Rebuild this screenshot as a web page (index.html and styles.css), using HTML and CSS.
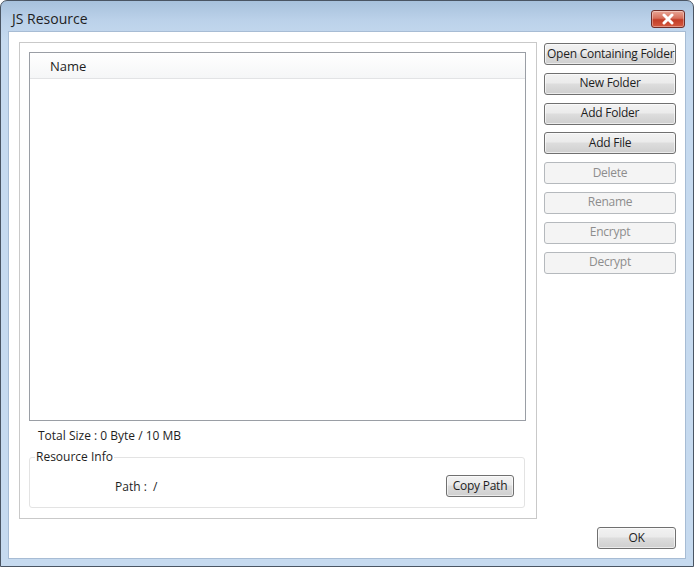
FILE: index.html
```html
<!DOCTYPE html>
<html>
<head>
<meta charset="utf-8">
<link rel="stylesheet" href="styles.css">
</head>
<body>
<div class="window">
  <div class="titlebar">
    <span class="title">JS Resource</span>
    <div class="close">
      <svg width="14" height="12" viewBox="0 0 14 12"><path d="M3 2 L11 10 M11 2 L3 10" stroke="#fff" stroke-width="3" stroke-linecap="round"/></svg>
    </div>
  </div>
  <div class="client">
    <div class="main">
      <div class="group">
        <div class="list">
          <div class="list-head">Name</div>
          <div class="list-body"></div>
        </div>
        <div class="total">Total Size : 0 Byte / 10 MB</div>
        <fieldset class="info">
          <legend>Resource Info</legend>
          <div class="info-row">
            <span class="path">Path :&nbsp; /</span>
            <button class="btn copy">Copy Path</button>
          </div>
        </fieldset>
      </div>
      <div class="side">
        <button class="btn">Open Containing Folder</button>
        <button class="btn">New Folder</button>
        <button class="btn">Add Folder</button>
        <button class="btn">Add File</button>
        <button class="btn" disabled>Delete</button>
        <button class="btn" disabled>Rename</button>
        <button class="btn" disabled>Encrypt</button>
        <button class="btn" disabled>Decrypt</button>
      </div>
    </div>
    <div class="footer">
      <button class="btn ok">OK</button>
    </div>
  </div>
</div>
</body>
</html>
```
FILE: styles.css
```css
* { box-sizing: border-box; }
html, body { margin: 0; padding: 0; }
body {
  width: 694px;
  height: 567px;
  overflow: hidden;
  font-family: "Open Sans", "Noto Sans", sans-serif;
  font-size: 12px;
  color: #1e1e1e;
  background: #fff;
}
.window {
  position: relative;
  width: 694px;
  height: 567px;
  border: 1px solid #4a5563;
  border-radius: 7px 7px 0 0;
  background: linear-gradient(180deg, #a7c1dc 0px, #bcd2ea 20px, #c6daef 40px, #c6daef 100%);
  display: flex;
  flex-direction: column;
}
.titlebar {
  height: 30px;
  display: flex;
  align-items: flex-start;
  justify-content: space-between;
  padding: 9px 8px 0 11px;
}
.title {
  font-size: 14px;
  line-height: 18px;
  color: #1e1e1e;
}
.close {
  width: 34px;
  height: 18px;
  margin-top: 0;
  border: 1px solid #6f2d28;
  border-radius: 3px;
  background: linear-gradient(180deg, #e8a595 0%, #d6705c 45%, #c23d27 55%, #d55a40 100%);
  display: flex;
  align-items: center;
  justify-content: center;
  box-shadow: inset 0 0 0 1px rgba(255,255,255,0.35);
}
.client {
  flex: 1;
  margin: 0 7px 7px 7px;
  background: #fff;
  border: 1px solid #a7bcd4;
  padding: 10px 9px 0 10px;
  display: flex;
  flex-direction: column;
}
.main {
  display: flex;
  gap: 7px;
}
.group {
  width: 518px;
  height: 477px;
  border: 1px solid #c9c9c9;
  box-shadow: inset 1px 1px 0 #fff;
  padding: 9px 10px 0 9px;
  display: flex;
  flex-direction: column;
}
.list {
  width: 497px;
  height: 369px;
  border: 1px solid #9a9ea5;
  display: flex;
  flex-direction: column;
}
.list-head {
  height: 26px;
  padding: 4px 0 0 20px;
  font-size: 13px;
  background: linear-gradient(180deg, #ffffff 0%, #f5f6f7 100%);
  border-bottom: 1px solid #e2e3e5;
}
.list-body { flex: 1; }
.total {
  margin: 6px 0 0 9px;
  height: 18px;
  line-height: 18px;
}
.info {
  margin: 5px 1px 0 0;
  padding: 0 10px 9px 0;
  border: 1px solid #e3e3e3;
  border-radius: 3px;
  height: 58px;
}
.info legend {
  padding: 0 1px;
  margin-left: 5px;
  line-height: 14px;
}
.info-row {
  display: flex;
  justify-content: space-between;
  align-items: center;
  padding-left: 85px;
  margin-top: 11px;
}
.path { margin-top: 0; }
.btn {
  font-family: inherit;
  font-size: 12px;
  color: #1e1e1e;
  height: 22px;
  padding: 0 2px 1px;
  border: 1px solid #707070;
  border-radius: 3px;
  background: linear-gradient(180deg, #f2f2f2 0%, #ebebeb 45%, #dddddd 50%, #cfcfcf 100%);
  box-shadow: inset 0 0 0 1px rgba(255,255,255,0.6);
  line-height: 18px;
  white-space: nowrap;
  letter-spacing: -0.25px;
}
.btn:disabled {
  color: #8d8d8d;
  border-color: #b5b9bd;
  background: #f4f4f4;
  box-shadow: none;
}
.side {
  width: 132px;
  display: flex;
  flex-direction: column;
  gap: 7.8px;
  padding-top: 1px;
}
.side .btn { width: 132px; }
.copy { width: 68px; height: 22px; }
.footer {
  display: flex;
  justify-content: flex-end;
  margin-top: 8px;
}
.ok { width: 79px; }
```
